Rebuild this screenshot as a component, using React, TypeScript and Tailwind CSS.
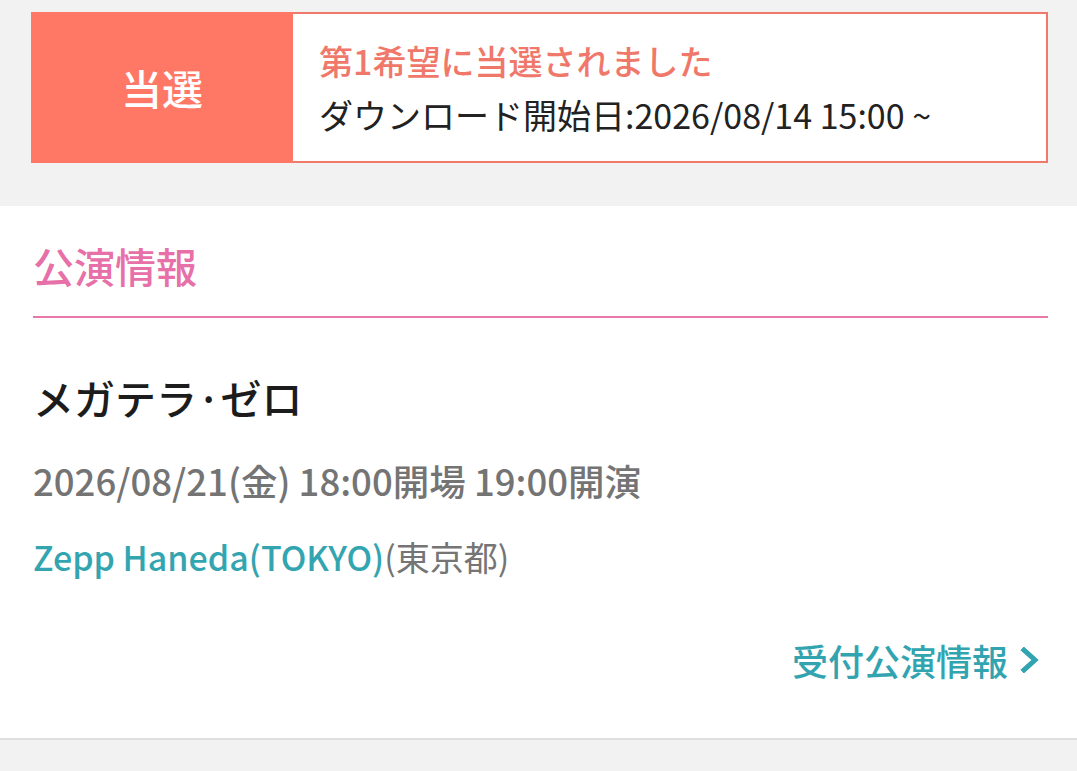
export default function App() {
  return (
    <main
      className="min-h-[771px] bg-[#f2f2f2] pt-[12px]"
      style={{ fontFamily: '"Noto Sans CJK JP", "Noto Sans", sans-serif' }}
    >
      <ResultCard />
      <section className="mt-[43px] border-b-2 border-[#dedede] bg-white pl-[33px] pr-[29px] pb-[53px] pt-[29px]">
        <h2 className="border-b-2 border-[#e778a8] pb-[21px] text-[41px] font-medium leading-[60px] text-[#e670a7]">
          公演情報
        </h2>
        <p className="mt-[51px] text-[41px] font-medium leading-[56px] text-[#1c1c1c]">メガテラ·ゼロ</p>
        <p className="mt-[31px] text-[36.5px] font-medium leading-[50px] text-[#747474]">
          2026/08/21(金) 18:00開場 19:00開演
        </p>
        <p className="mt-[28px] text-[34px] leading-[46px] text-[#757575]">
          <span className="font-medium text-[#33a5b0]">Zepp Haneda(TOKYO)</span>(東京都)
        </p>
        <div className="mt-[55px] flex justify-end">
          <a className="flex items-center gap-[12px] pr-[8px] text-[36px] font-medium leading-[50px] text-[#32a4b0]">
            受付公演情報
            <svg width="20" height="26" viewBox="0 0 20 26" fill="none">
              <polyline
                points="4,3 15,13 4,23"
                stroke="#32a4b0"
                strokeWidth="5"
                strokeLinecap="square"
              />
            </svg>
          </a>
        </div>
      </section>
    </main>
  );
}

function ResultCard() {
  return (
    <div className="ml-[31px] mr-[29px] flex h-[151px] border-2 border-[#ef7a6b] bg-white">
      <div className="-m-[2px] flex w-[262px] shrink-0 items-center justify-center bg-[#ff7865]">
        <span className="text-[41px] font-medium text-white">当選</span>
      </div>
      <div className="flex flex-col justify-center pl-[28px]">
        <p className="text-[34px] font-medium leading-[54px] text-[#f0786a]">第1希望に当選されました</p>
        <p className="text-[34px] leading-[54px] text-[#222]">ダウンロード開始日:2026/08/14 15:00 ~</p>
      </div>
    </div>
  );
}
